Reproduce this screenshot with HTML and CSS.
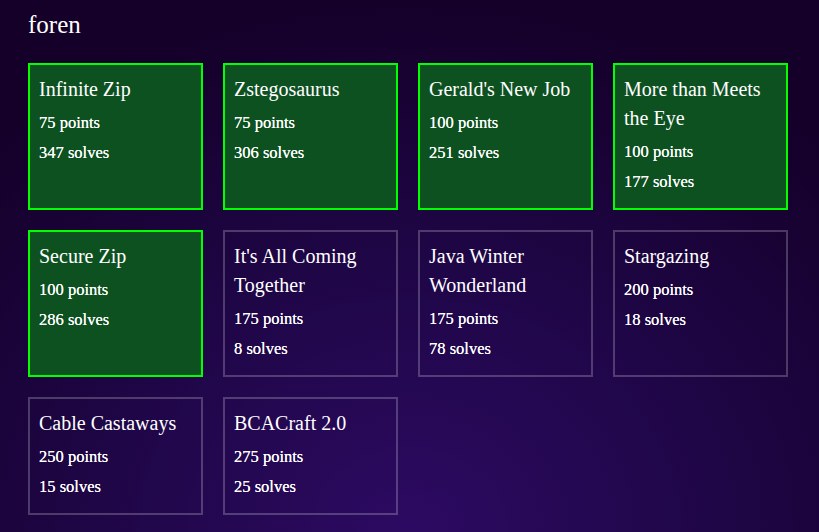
FILE: index.html
```html
<!DOCTYPE html>
<html>
<head>
<meta charset="utf-8">
<link rel="stylesheet" href="styles.css">
</head>
<body>
<main class="page">
  <h1 class="category">foren</h1>
  <div class="grid">
    <div class="card solved"><h3 class="title">Infinite Zip</h3><p class="meta">75 points</p><p class="meta">347 solves</p></div>
    <div class="card solved"><h3 class="title">Zstegosaurus</h3><p class="meta">75 points</p><p class="meta">306 solves</p></div>
    <div class="card solved"><h3 class="title">Gerald's New Job</h3><p class="meta">100 points</p><p class="meta">251 solves</p></div>
    <div class="card solved"><h3 class="title">More than Meets the Eye</h3><p class="meta">100 points</p><p class="meta">177 solves</p></div>
    <div class="card solved"><h3 class="title">Secure Zip</h3><p class="meta">100 points</p><p class="meta">286 solves</p></div>
    <div class="card"><h3 class="title">It's All Coming Together</h3><p class="meta">175 points</p><p class="meta">8 solves</p></div>
    <div class="card"><h3 class="title">Java Winter Wonderland</h3><p class="meta">175 points</p><p class="meta">78 solves</p></div>
    <div class="card"><h3 class="title">Stargazing</h3><p class="meta">200 points</p><p class="meta">18 solves</p></div>
    <div class="card"><h3 class="title">Cable Castaways</h3><p class="meta">250 points</p><p class="meta">15 solves</p></div>
    <div class="card"><h3 class="title">BCACraft 2.0</h3><p class="meta">275 points</p><p class="meta">25 solves</p></div>
  </div>
</main>
</body>
</html>
```

FILE: styles.css
```css
html, body {
  margin: 0;
  height: 100%;
}
body {
  background: radial-gradient(ellipse 75% 100% at 50% 100%, #2c0a62 0%, #1f0647 50%, #140029 100%);
  color: #ffffff;
  font-family: "Liberation Serif", "Times New Roman", serif;
  overflow: hidden;
}
.page {
  padding: 9px 31px 0 28px;
}
.category {
  margin: 0 0 16px 0;
  font-size: 25px;
  font-weight: normal;
  line-height: 32px;
  height: 38px;
}
.grid {
  display: grid;
  grid-template-columns: repeat(4, 175px);
  column-gap: 20px;
  row-gap: 20px;
}
.card {
  box-sizing: border-box;
  border: 2px solid rgba(255, 255, 255, 0.22);
  padding: 10px 9px 11px 9px;
}
.card.solved {
  background: #0e5121;
  border-color: #00ff00;
}
.title {
  margin: 0 0 4px 0;
  font-size: 20px;
  font-weight: normal;
  line-height: 29px;
}
.meta {
  margin: 0;
  font-size: 16.5px;
  line-height: 30px;
  font-weight: normal;
  text-shadow: 0 0 0.6px #ffffff;
}
```
